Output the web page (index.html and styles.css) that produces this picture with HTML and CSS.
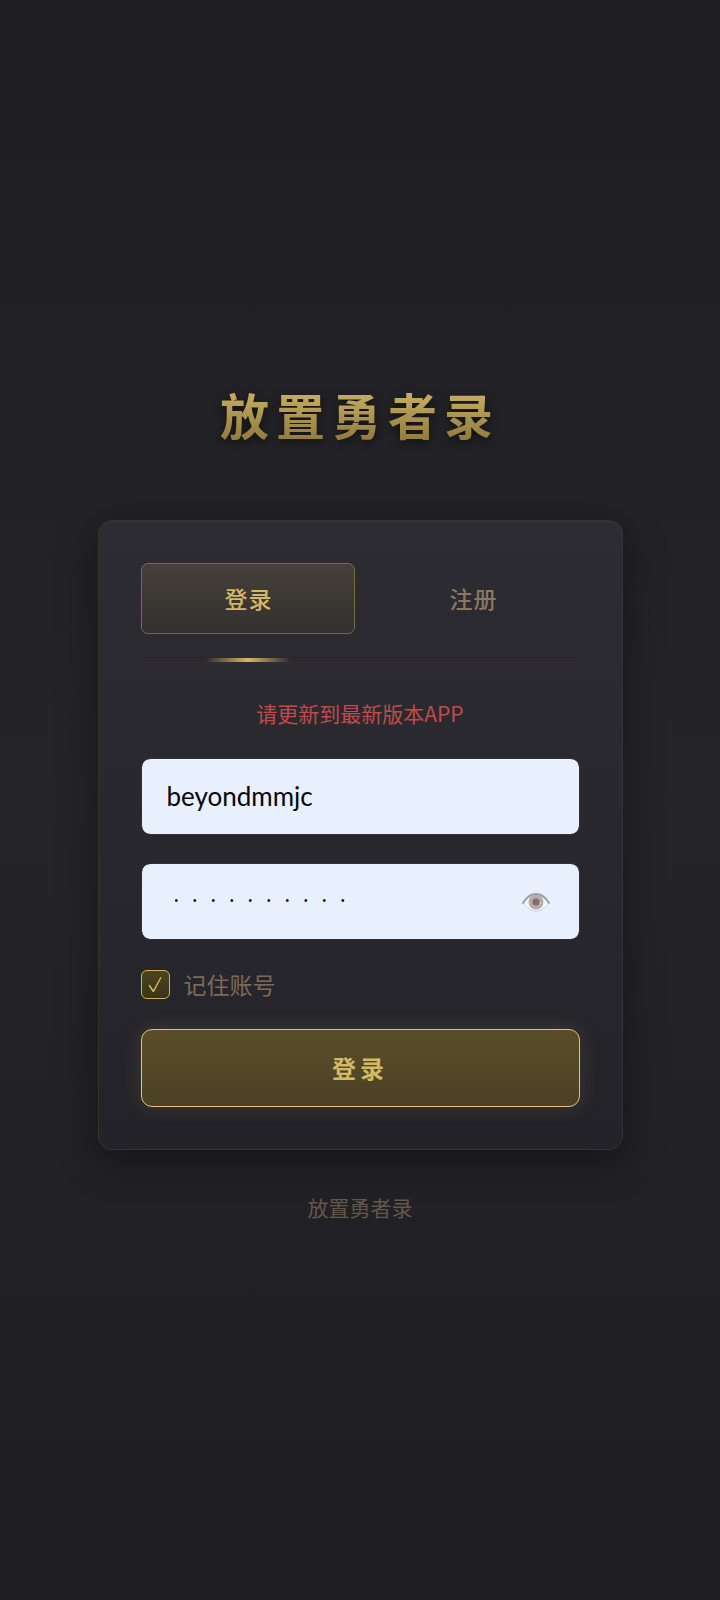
FILE: index.html
```html
<!DOCTYPE html>
<html lang="zh-CN">
<head>
<meta charset="utf-8">
<meta name="viewport" content="width=device-width, initial-scale=1">
<title>放置勇者录</title>
<link rel="stylesheet" href="styles.css">
</head>
<body>
<main class="page">
  <h1 class="title">放置勇者录</h1>
  <form class="card">
    <div class="tabs">
      <button class="tab tab-active" type="button">登录</button>
      <button class="tab" type="button">注册</button>
    </div>
    <p class="message" role="alert">请更新到最新版本APP</p>
    <div class="fields">
      <input class="field" type="text" aria-label="账号" value="beyondmmjc">
      <div class="password">
        <input class="field field-password" type="password" aria-label="密码" value="0123456789">
        <button class="reveal" type="button" aria-label="显示密码">
          <svg class="eye" viewBox="0 0 28 20" aria-hidden="true">
            <path d="M1 10.500C6 3.500 10 2 14 2s8 1.500 13 8.500C23 16.500 18.500 19 14 19S5 16.500 1 10.500Z" fill="#f5f7fb" stroke="#cbd1df" stroke-width="1"/>
            <circle cx="14" cy="10" r="7.500" fill="#b9aaa8"/>
            <circle cx="14" cy="10" r="3.500" fill="#747074"/>
            <circle cx="18.500" cy="11.500" r="1" fill="#d8c4bd"/>
            <path d="M1 11C5 4.500 9.500 2 14 2s9 2.500 13 9" fill="none" stroke="#9b9fa9" stroke-width="2" stroke-linecap="round"/>
          </svg>
        </button>
      </div>
    </div>
    <label class="remember"><input class="check" type="checkbox" checked><span>记住账号</span></label>
    <button class="submit" type="submit">登录</button>
  </form>
  <footer class="footer">放置勇者录</footer>
</main>
</body>
</html>
```
FILE: styles.css
```css
* {
  box-sizing: border-box;
}

body {
  margin: 0;
  font-family: "Noto Sans CJK SC", sans-serif;
  background: #1e1e22;
}

button,
input {
  margin: 0;
  font-family: inherit;
}

.page {
  min-height: 100vh;
  display: flex;
  flex-direction: column;
  align-items: center;
  justify-content: center;
  padding: 24px;
  background: linear-gradient(180deg, #1e1e22 0%, #252529 50%, #1e1e22 100%);
}

.title {
  margin: 0 0 74px;
  font-size: 49px;
  line-height: 65px;
  font-weight: 700;
  letter-spacing: 7px;
  color: transparent;
  background: linear-gradient(180deg, #c9b26a 0%, #c4ac60 20%, #8f783c 95%);
  -webkit-background-clip: text;
  background-clip: text;
  filter: drop-shadow(0 3px 4px rgba(0, 0, 0, 0.5));
}

.card {
  width: 100%;
  max-width: 525px;
  padding: 42px;
  display: flex;
  flex-direction: column;
  border: 1px solid #3a302e;
  border-radius: 14px;
  background: linear-gradient(180deg, #2d2c32 0%, #242329 100%);
  box-shadow: 0 10px 40px rgba(0, 0, 0, 0.4), inset 0 2px 2px rgba(70, 55, 50, 0.4);
}

.tabs {
  display: grid;
  grid-template-columns: 1fr 1fr;
  gap: 11px;
  padding-bottom: 27px;
  border-bottom: 2px solid #362c2e;
}

.tab {
  position: relative;
  height: 71px;
  padding: 0 0 2px 2px;
  border: 1px solid transparent;
  border-radius: 7px;
  background: none;
  color: #8b7862;
  font-size: 23px;
  font-weight: 500;
  letter-spacing: 1px;
}

.tab-active {
  color: #d4b866;
  border-color: #766a4c;
  background: linear-gradient(180deg, #464038 0%, #32302f 100%);
}

.tab-active::after {
  content: "";
  position: absolute;
  left: 50%;
  bottom: -29px;
  width: 84px;
  height: 4px;
  margin-left: -42px;
  background: linear-gradient(90deg, transparent, #d4b866, transparent);
}

.message {
  margin: 36px 0 31px;
  color: #c04b4b;
  font-size: 21px;
  line-height: 28px;
  text-align: center;
}

.fields {
  display: grid;
  gap: 28px;
}

.password {
  position: relative;
}

.field {
  display: block;
  width: 100%;
  height: 77px;
  padding: 0 25px 2px;
  border: 1px solid #34302f;
  border-radius: 9px;
  background: #e8f0fe;
  background-clip: padding-box;
  color: #05070c;
  font-family: Lato, sans-serif;
  font-size: 26px;
  outline: none;
}

.field-password {
  padding-left: 33px;
  padding-right: 80px;
  font-family: "Liberation Sans", sans-serif;
  font-size: 10px;
  letter-spacing: 15px;
}

.reveal {
  position: absolute;
  top: 0;
  right: 16px;
  width: 56px;
  height: 100%;
  padding: 0;
  display: flex;
  align-items: center;
  justify-content: center;
  border: 0;
  background: none;
}

.eye {
  width: 28px;
  height: 20px;
}

.remember {
  margin: 30px 0;
  display: flex;
  align-items: center;
  gap: 14px;
  color: #7d6b59;
  font-size: 23px;
  line-height: 29px;
}

.check {
  appearance: none;
  width: 29px;
  height: 29px;
  border: 1px solid #cdb262;
  border-radius: 6px;
  background: linear-gradient(180deg, #4d421d, #3c3519);
  display: grid;
  place-items: center;
}

.check:checked::before {
  content: "";
  width: 13px;
  height: 15px;
  background: #d4b866;
  clip-path: polygon(0 56%, 9% 50%, 37% 86%, 92% 0, 100% 3%, 42% 100%, 33% 100%);
}

.submit {
  height: 78px;
  padding: 0 0 2px;
  border: 1px solid #e0c678;
  border-radius: 11px;
  background: linear-gradient(180deg, #5a4d29 0%, #4b4124 100%);
  color: #d4b866;
  font-size: 24px;
  font-weight: 700;
  letter-spacing: 4px;
  box-shadow: 0 0 20px rgba(212, 184, 102, 0.15);
}

.footer {
  margin-top: 45px;
  color: #62574d;
  font-size: 21px;
  line-height: 24px;
}
```
